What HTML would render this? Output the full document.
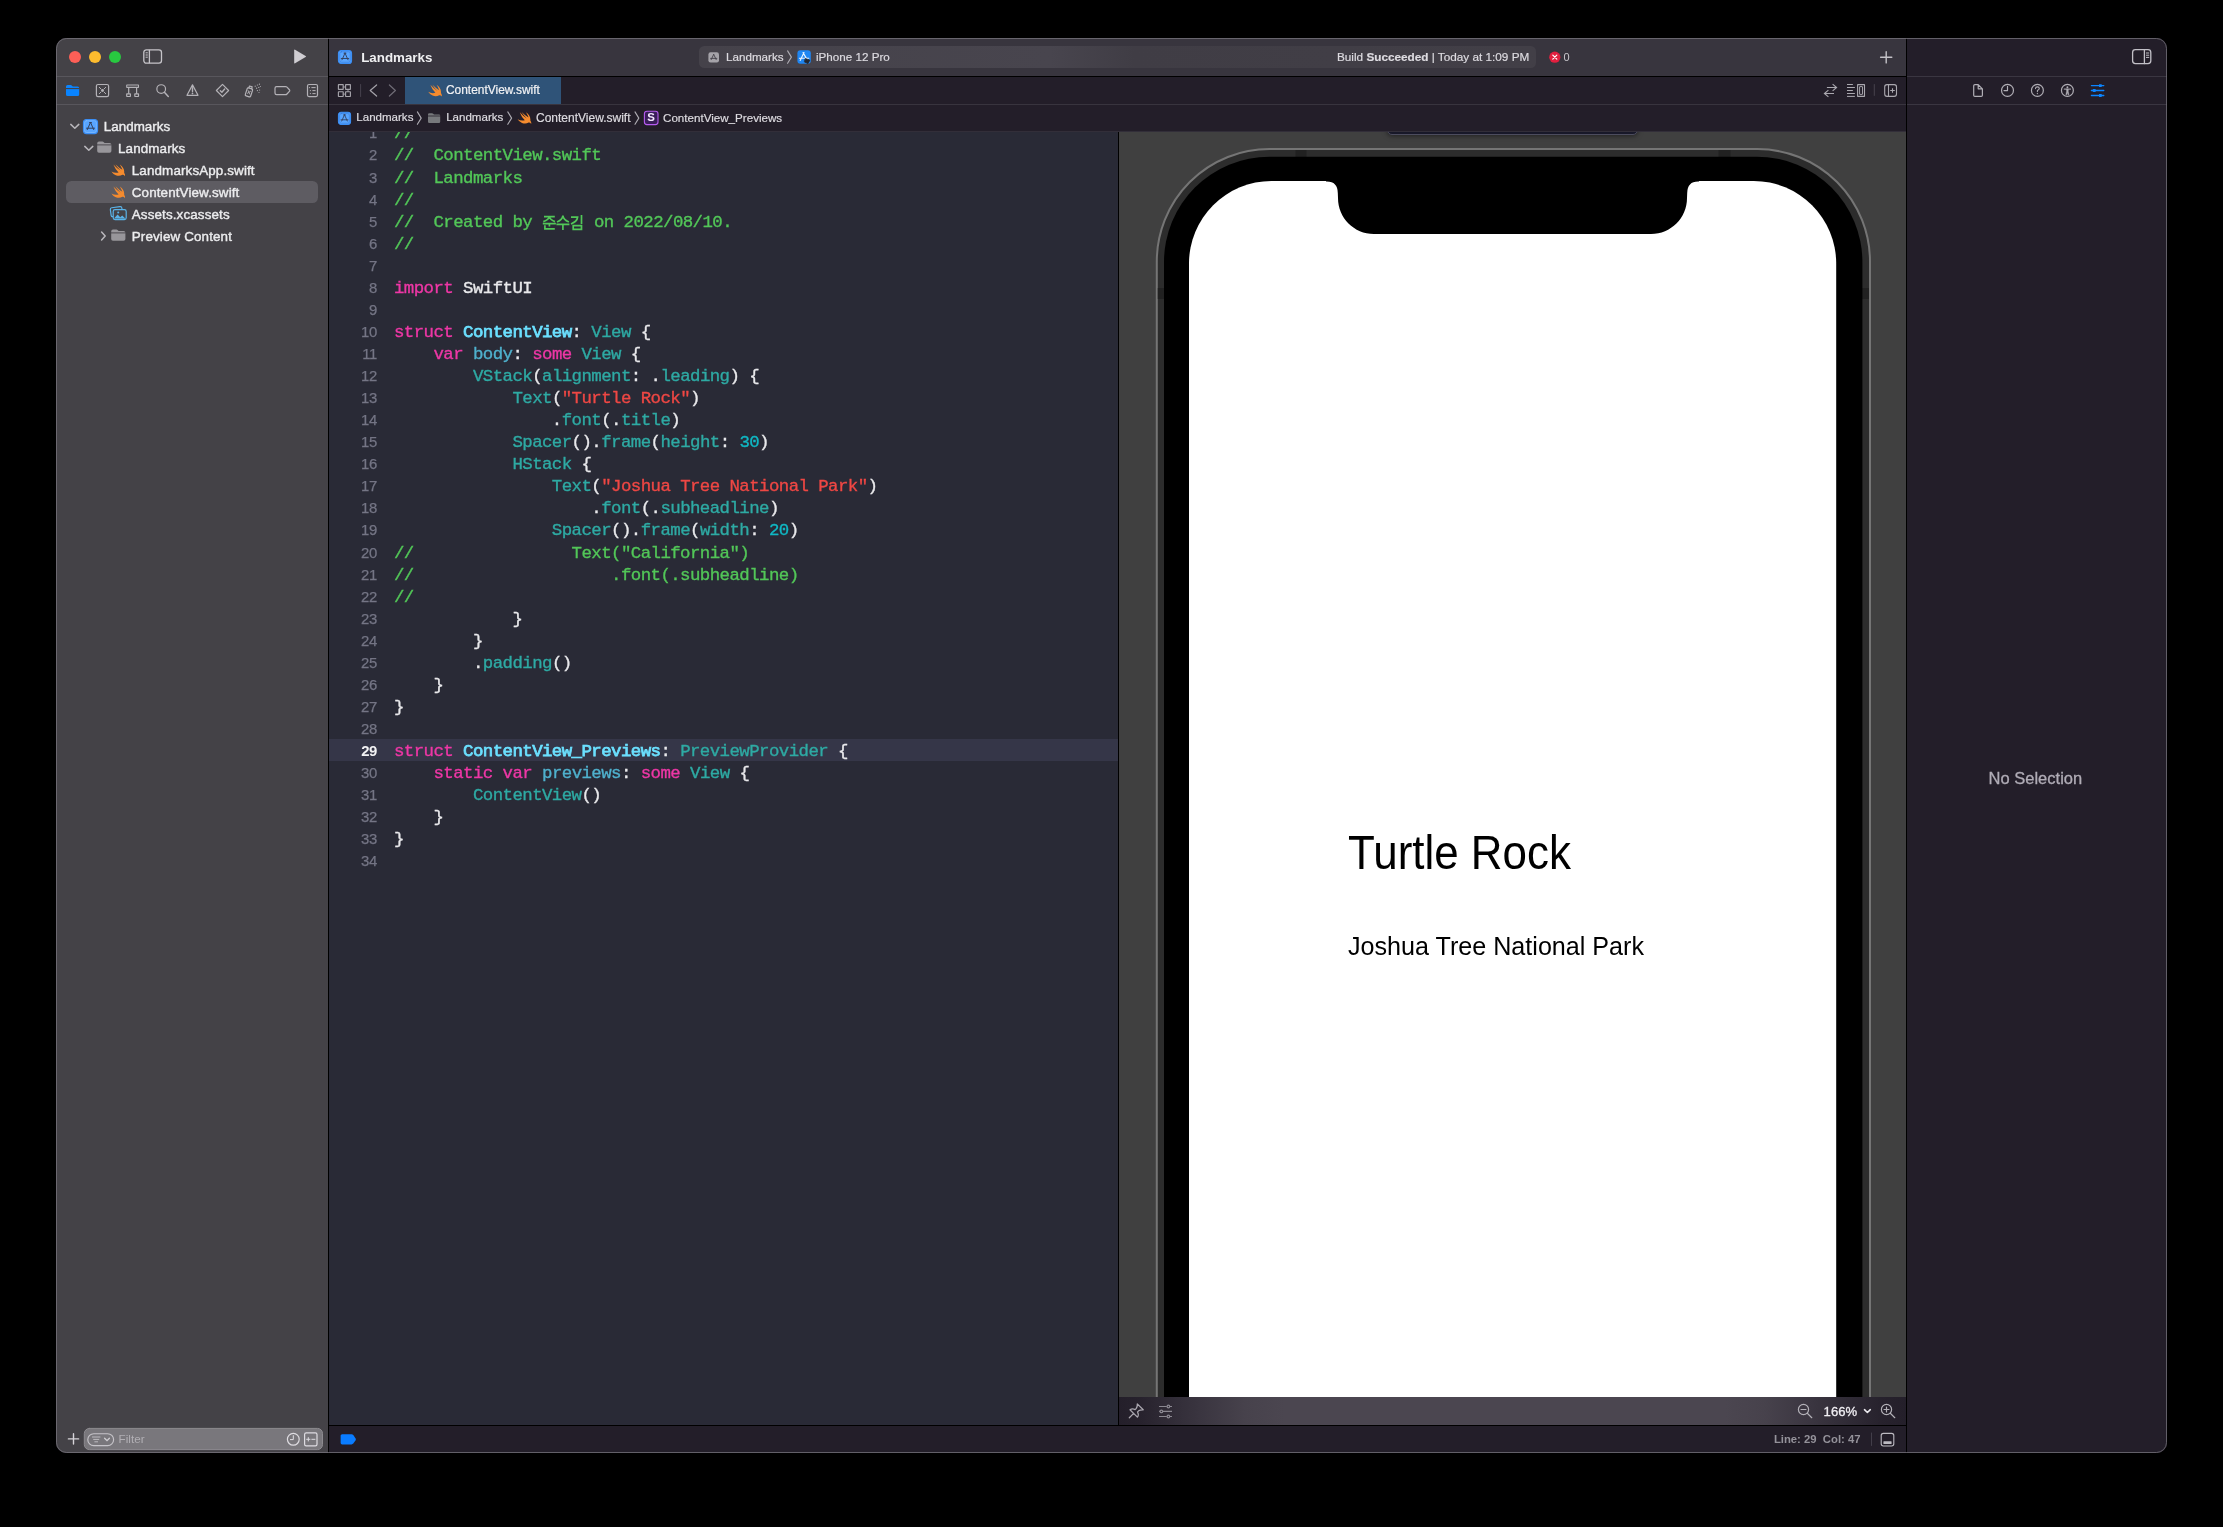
<!DOCTYPE html>
<html><head><meta charset="utf-8"><title>Xcode</title>
<style>
*{box-sizing:border-box;margin:0;padding:0}
html,body{width:2223px;height:1527px;background:#000;overflow:hidden}
body{font-family:"Liberation Sans",sans-serif;position:relative;color:#e6e6e8}
.abs{position:absolute}
.t{position:absolute;white-space:pre;line-height:1}
#win{position:absolute;left:56px;top:38px;width:2111px;height:1415px;border-radius:10.5px;overflow:hidden;background:#231e29}
#winborder{position:absolute;left:56px;top:38px;width:2111px;height:1415px;border-radius:10.5px;border:1px solid rgba(120,118,126,.75);pointer-events:none;z-index:50}
/* coordinates inside #win are page coords shifted by (-56,-38); use .pg wrapper to keep page coords */
#pg{position:absolute;left:-56px;top:-38px;width:2223px;height:1527px;will-change:transform}
#sidebar{left:56px;top:38px;width:272px;height:1415px;background:#444247}
.hl{position:absolute;height:1px}
.vl{position:absolute;width:1px}
.sb{font-size:13.4px;letter-spacing:.13px;color:#ececee;-webkit-text-stroke:0.4px #ececee}
.code{font-family:"Liberation Mono",monospace;font-size:17.4px;letter-spacing:-0.57px;line-height:22px;white-space:pre;position:absolute;left:394px;height:22px;color:#e9e9ec;-webkit-text-stroke:0.35px}
.ln{font-family:"Liberation Sans",sans-serif;font-size:14.9px;letter-spacing:-0.25px;line-height:22px;position:absolute;left:329px;width:48.1px;text-align:right;color:#747585;height:22px;-webkit-text-stroke:0.25px}
.c{color:#52c758}.k{color:#ee37a6}.d{color:#6be0ff;-webkit-text-stroke:0.75px #6be0ff}.o{color:#4fb1cd}.ty{color:#2eaaa4}.s{color:#ef4744}.n{color:#10b8c4}
svg{position:absolute;overflow:visible}
.kor{display:inline-block;width:42.1px;height:22px;vertical-align:top;position:relative}.kor svg{left:0;top:0}
.tb{font-size:11.65px;color:#dddbe0;-webkit-text-stroke:.2px}
.bc{font-size:11.85px;color:#dddbe0;-webkit-text-stroke:.2px}
.cur{color:#f2f2f4;font-weight:bold;-webkit-text-stroke:0;letter-spacing:-0.3px}
</style></head><body>
<div id="win"><div id="pg">
<!-- ===== backgrounds ===== -->
<div class="abs" id="sidebar"></div>
<div class="abs" style="left:328px;top:38px;width:1px;height:1415px;background:#000"></div>
<!-- editor title bar -->
<div class="abs" style="left:329px;top:38px;width:1577px;height:38px;background:#38353e"></div>
<div class="abs" style="left:329px;top:76px;width:1577px;height:1px;background:#000"></div>
<!-- tab bar + breadcrumb -->
<div class="abs" style="left:329px;top:77px;width:1577px;height:55px;background:#231e29"></div>
<div class="abs" style="left:329px;top:104px;width:1577px;height:1px;background:#38343e"></div>
<div class="abs" style="left:329px;top:131px;width:1577px;height:1px;background:#322e39"></div>
<!-- code editor -->
<div class="abs" style="left:329px;top:132px;width:789px;height:1293px;background:#292a36"></div>
<div class="abs" style="left:1118px;top:132px;width:1px;height:1293px;background:#000"></div>
<!-- canvas -->
<div class="abs" id="canvas" style="left:1119px;top:132px;width:787px;height:1265px;background:#404040;overflow:hidden"></div>
<!-- canvas bottom bar -->
<div class="abs" style="left:1119px;top:1397px;width:787px;height:28px;background:linear-gradient(90deg,#241f2a 0%,#27222d 2.7%,#3a3540 10.3%,#47424c 16%,#4b4650 21%,#4b4650 77%,#47424c 82%,#3a3540 88.1%,#27222d 96.7%,#241f2a 100%)"></div>
<div class="abs" style="left:329px;top:1425px;width:1577px;height:1px;background:#000"></div>
<!-- status bar -->
<div class="abs" style="left:329px;top:1426px;width:1577px;height:27px;background:#231e29"></div>
<!-- inspector -->
<div class="abs" style="left:1906px;top:38px;width:1px;height:1415px;background:#000"></div>
<div class="abs" style="left:1907px;top:38px;width:260px;height:1415px;background:#231e29"></div>
<div class="abs" style="left:1907px;top:76px;width:260px;height:1px;background:#3a3641"></div>
<div class="abs" style="left:1907px;top:104px;width:260px;height:1px;background:#3a3641"></div>
<!-- sidebar lines -->
<div class="abs" style="left:56px;top:76px;width:272px;height:1px;background:#58565c"></div>
<div class="abs" style="left:56px;top:104px;width:272px;height:1px;background:#58565c"></div>
<!-- ===== canvas / phone ===== -->
<div class="abs" style="left:1119px;top:132px;width:787px;height:1265px;overflow:hidden">
 <div class="abs" style="left:267.5px;top:-7px;width:251.5px;height:10.4px;border-radius:5px;background:#181829;border:.7px solid #4c4c5e;box-shadow:0 1px 5px rgba(0,0,0,.5)"></div>
 <svg style="left:0;top:0" width="787" height="1265" viewBox="1119 132 787 1265">
  <rect x="1156.8" y="149.1" width="713.2" height="1500" rx="112.5" ry="112.5" fill="#2c2c2c" stroke="#757575" stroke-width="2"/>
  <rect x="1295.5" y="150.1" width="11" height="7" fill="#212121"/>
  <rect x="1718.5" y="150.1" width="12" height="7" fill="#212121"/>
  <rect x="1157.8" y="288" width="7" height="11" fill="#212121"/>
  <rect x="1862" y="288" width="7" height="11" fill="#212121"/>
  <rect x="1164" y="156.7" width="698.4" height="1500" rx="105.5" ry="105.5" fill="#000"/>
  <rect x="1189" y="181" width="647.2" height="1401" rx="82.5" ry="82.5" fill="#fff"/>
  <path d="M1326 181.5 Q1337.6 181 1337.8 193 L1338 198 C1338 217.9 1354.1 234 1374 234 L1651 234 C1670.9 234 1687 217.9 1687 198 L1687.2 193 Q1687.4 181 1699 181.5 L1699 170 L1326 170 Z" fill="#000"/>
 </svg>
 <div class="t" id="tr" style="left:229.2px;top:696.6px;font-size:47.8px;color:#000;transform:scaleX(.919);transform-origin:0 0">Turtle Rock</div>
 <div class="t" id="jt" style="left:229.4px;top:801.8px;font-size:25.5px;color:#000;transform:scaleX(.985);transform-origin:0 0">Joshua Tree National Park</div>
</div>
<!-- ===== code ===== -->
<div class="abs" style="left:329px;top:132px;width:789px;height:1293px;overflow:hidden"><div class="abs" style="left:-329px;top:-132px;width:2223px;height:1527px">
<div class="abs" style="left:329px;top:739.1px;width:789px;height:22px;background:#353648"></div>
<div class="ln" style="top:122.38px">1</div>
<div class="code" style="top:123.40px"><span class="c">//</span></div>
<div class="ln" style="top:144.44px">2</div>
<div class="code" style="top:145.46px"><span class="c">//  ContentView.swift</span></div>
<div class="ln" style="top:166.50px">3</div>
<div class="code" style="top:167.52px"><span class="c">//  Landmarks</span></div>
<div class="ln" style="top:188.56px">4</div>
<div class="code" style="top:189.58px"><span class="c">//</span></div>
<div class="ln" style="top:210.62px">5</div>
<div class="code" style="top:211.64px"><span class="c">//  Created by </span><span class="kor"><svg width="42" height="22" viewBox="0 0 42 22" fill="none" stroke="#52c758" stroke-width="1.7"><path d="M2 4.6H12.8M7.4 4.6Q6.6 8 1.3 9.6M7.4 4.6Q8.2 8 13 9.6M.8 11.6H13.9M7.4 11.6V14.4M2.9 13.3V16.9H12.8"/><path d="M20.9 3.6Q20.5 7.5 15 10M20.9 3.6Q21.3 7.5 26.9 10M14.4 12.3H27.4M20.9 12.3V17.9"/><path d="M29 5.2H35.6Q35.2 9.5 29 12M39.5 3.1V12M31.2 13.6H39.5V17.3H31.2Z"/></svg></span><span class="c"> on 2022/08/10.</span></div>
<div class="ln" style="top:232.68px">6</div>
<div class="code" style="top:233.70px"><span class="c">//</span></div>
<div class="ln" style="top:254.74px">7</div>
<div class="ln" style="top:276.80px">8</div>
<div class="code" style="top:277.82px"><span class="k">import</span> SwiftUI</div>
<div class="ln" style="top:298.86px">9</div>
<div class="ln" style="top:320.92px">10</div>
<div class="code" style="top:321.94px"><span class="k">struct</span> <span class="d">ContentView</span>: <span class="ty">View</span> {</div>
<div class="ln" style="top:342.98px">11</div>
<div class="code" style="top:344.00px">    <span class="k">var</span> <span class="o">body</span>: <span class="k">some</span> <span class="ty">View</span> {</div>
<div class="ln" style="top:365.04px">12</div>
<div class="code" style="top:366.06px">        <span class="ty">VStack</span>(<span class="ty">alignment</span>: .<span class="ty">leading</span>) {</div>
<div class="ln" style="top:387.10px">13</div>
<div class="code" style="top:388.12px">            <span class="ty">Text</span>(<span class="s">"Turtle Rock"</span>)</div>
<div class="ln" style="top:409.16px">14</div>
<div class="code" style="top:410.18px">                .<span class="ty">font</span>(.<span class="ty">title</span>)</div>
<div class="ln" style="top:431.22px">15</div>
<div class="code" style="top:432.24px">            <span class="ty">Spacer</span>().<span class="ty">frame</span>(<span class="ty">height</span>: <span class="n">30</span>)</div>
<div class="ln" style="top:453.28px">16</div>
<div class="code" style="top:454.30px">            <span class="ty">HStack</span> {</div>
<div class="ln" style="top:475.34px">17</div>
<div class="code" style="top:476.36px">                <span class="ty">Text</span>(<span class="s">"Joshua Tree National Park"</span>)</div>
<div class="ln" style="top:497.40px">18</div>
<div class="code" style="top:498.42px">                    .<span class="ty">font</span>(.<span class="ty">subheadline</span>)</div>
<div class="ln" style="top:519.46px">19</div>
<div class="code" style="top:520.48px">                <span class="ty">Spacer</span>().<span class="ty">frame</span>(<span class="ty">width</span>: <span class="n">20</span>)</div>
<div class="ln" style="top:541.52px">20</div>
<div class="code" style="top:542.54px"><span class="c">//                Text("California")</span></div>
<div class="ln" style="top:563.58px">21</div>
<div class="code" style="top:564.60px"><span class="c">//                    .font(.subheadline)</span></div>
<div class="ln" style="top:585.64px">22</div>
<div class="code" style="top:586.66px"><span class="c">//</span></div>
<div class="ln" style="top:607.70px">23</div>
<div class="code" style="top:608.72px">            }</div>
<div class="ln" style="top:629.76px">24</div>
<div class="code" style="top:630.78px">        }</div>
<div class="ln" style="top:651.82px">25</div>
<div class="code" style="top:652.84px">        .<span class="ty">padding</span>()</div>
<div class="ln" style="top:673.88px">26</div>
<div class="code" style="top:674.90px">    }</div>
<div class="ln" style="top:695.94px">27</div>
<div class="code" style="top:696.96px">}</div>
<div class="ln" style="top:718.00px">28</div>
<div class="ln cur" style="top:740.06px">29</div>
<div class="code" style="top:741.08px"><span class="k">struct</span> <span class="d">ContentView_Previews</span>: <span class="ty">PreviewProvider</span> {</div>
<div class="ln" style="top:762.12px">30</div>
<div class="code" style="top:763.14px">    <span class="k">static</span> <span class="k">var</span> <span class="o">previews</span>: <span class="k">some</span> <span class="ty">View</span> {</div>
<div class="ln" style="top:784.18px">31</div>
<div class="code" style="top:785.20px">        <span class="ty">ContentView</span>()</div>
<div class="ln" style="top:806.24px">32</div>
<div class="code" style="top:807.26px">    }</div>
<div class="ln" style="top:828.30px">33</div>
<div class="code" style="top:829.32px">}</div>
<div class="ln" style="top:850.36px">34</div>
</div></div>
<!-- ===== sidebar ===== -->
<div class="abs" style="left:68.8px;top:50.8px;width:12.4px;height:12.4px;border-radius:50%;background:#fe5f57"></div>
<div class="abs" style="left:88.8px;top:50.8px;width:12.4px;height:12.4px;border-radius:50%;background:#febc2e"></div>
<div class="abs" style="left:108.8px;top:50.8px;width:12.4px;height:12.4px;border-radius:50%;background:#28c840"></div>
<!-- sidebar toggle -->
<svg style="left:143px;top:49px" width="20" height="16" viewBox="0 0 20 16" fill="none" stroke="#c6c4c9" stroke-width="1.3"><rect x=".8" y=".8" width="17.7" height="13.4" rx="2.6"/><path d="M6.4 .8V14.2"/><path d="M2.6 3.8H4.8M2.6 6H4.8M2.6 8.2H4.8" stroke-width="1"/></svg>
<!-- play -->
<svg style="left:293.2px;top:49px" width="14" height="16" viewBox="0 0 14 16"><path d="M1.2 1.2Q1.2 .2 2.1 .7L12.6 6.9Q13.6 7.5 12.6 8.1L2.1 14.3Q1.2 14.8 1.2 13.8Z" fill="#cfcdd2"/></svg>
<!-- navigator icons -->
<svg style="left:56px;top:77px" width="272" height="27" viewBox="56 77 272 27" fill="none" stroke="#b4b2b7" stroke-width="1.2" stroke-linecap="round" stroke-linejoin="round">
 <path d="M66 86.6Q66 85 67.6 85H70.6Q71.4 85 72 85.7L72.8 86.6H77.6Q79.2 86.6 79.2 88.2V94.4Q79.2 96 77.6 96H67.6Q66 96 66 94.4Z" fill="#0a84ff" stroke="none"/>
 <path d="M65.5 88.55H79.7" stroke="#444247" stroke-width="1.1" stroke-linecap="butt"/>
 <rect x="96.4" y="84.5" width="12.2" height="12.1" rx="1.6"/><path d="M99.3 87.3L100.9 88.9M105.7 87.3L104.1 88.9M99.3 93.7L100.9 92.1M105.7 93.7L104.1 92.1" stroke-width="1"/><circle cx="102.5" cy="90.5" r="1.45" fill="#b4b2b7" stroke="none"/>
 <g stroke-linejoin="miter" stroke-linecap="butt"><rect x="126.7" y="85" width="11.8" height="2.35" rx=".2" stroke-width="1.05"/><path d="M128.7 87.4V93.8M136.6 87.4V93.8"/><rect x="126.7" y="93.9" width="3.7" height="2.6" rx=".2"/><rect x="134.8" y="93.9" width="3.7" height="2.6" rx=".2"/></g>
 <circle cx="161.2" cy="89.1" r="4.35"/><path d="M164.4 92.3L168.3 96.4" stroke-width="1.5"/>
 <path d="M192.5 84.9L198 95.3H187Z"/><path d="M192.5 87.8V91.6" stroke-width="1.4"/><circle cx="192.5" cy="93.4" r=".85" fill="#b4b2b7" stroke="none"/>
 <path d="M222.5 84.4L228.6 90.5L222.5 96.6L216.4 90.5Z"/><path d="M220.3 90.7L221.9 92.3L224.7 89" stroke-width="1.35"/>
 <g transform="rotate(18 250 91)"><rect x="246.6" y="88.4" width="5.6" height="8.4" rx="1.2"/><path d="M248 88.4V86.4H250.8V88.4"/><path d="M248.2 91.2L250.6 94M250.6 91.2L248.2 94" stroke-width=".8"/></g>
 <g stroke="none" fill="#b4b2b7"><circle cx="255.2" cy="86.2" r=".6"/><circle cx="257.4" cy="85" r=".6"/><circle cx="259.4" cy="84.2" r=".6"/><circle cx="256.6" cy="88.2" r=".6"/><circle cx="258.8" cy="87.4" r=".6"/><circle cx="260.4" cy="86.6" r=".5"/><circle cx="257.4" cy="90.6" r=".6"/><circle cx="259.6" cy="90" r=".6"/><circle cx="259" cy="92.6" r=".5"/></g>
 <path d="M276.6 86.6H285.6Q286.4 86.6 287 87.2L289.6 90Q290 90.6 289.6 91.2L287 94Q286.4 94.7 285.6 94.7H276.6Q275 94.7 275 93.1V88.2Q275 86.6 276.6 86.6Z"/>
 <rect x="307.5" y="84.5" width="10" height="12.1" rx="1.5"/><path d="M311.4 87.6H315.6M312.4 90.6H315.6M312.4 93.6H315.6" stroke-width="1" stroke-linecap="butt"/><g fill="#b4b2b7" stroke="none"><rect x="308.9" y="87.1" width="1" height="1"/><rect x="309.9" y="90.1" width="1" height="1"/><rect x="309.9" y="93.1" width="1" height="1"/></g>
</svg>
<!-- tree -->
<div class="abs" style="left:66px;top:181px;width:252px;height:22px;border-radius:5.5px;background:#5e5c62"></div>
<svg style="left:56px;top:110px" width="272" height="140" viewBox="56 110 272 140" fill="none" stroke-linecap="round" stroke-linejoin="round">
 <g stroke="#b9b7bc" stroke-width="1.5"><path d="M70.8 124.4L74.8 128.2L78.8 124.4"/><path d="M84.8 146.4L88.8 150.2L92.8 146.4"/><path d="M101.6 232L105.2 236L101.6 240"/></g>
 <!-- project icon -->
 <rect x="83.5" y="119.6" width="14" height="14" rx="3" fill="#58a5ff" stroke="#3b8ef5" stroke-width="1.2"/><rect x="84.6" y="120.7" width="11.8" height="11.8" rx="2" fill="none" stroke="#8cc3ff" stroke-width=".5"/>
 <path d="M90.5 122.4L87.3 129.6M90.5 122.4L93.7 129.6M86.5 128.2H94.5M89.5 122.6H91.5" stroke="#33405e" stroke-width="1"/>
 <!-- folders -->
 <g fill="#98969b" stroke="none">
  <path d="M97.2 143.4Q97.2 141.6 99 141.6H102.4Q103.2 141.6 103.8 142.2L104.6 143H109.6Q111.4 143 111.4 144.8V151Q111.4 152.8 109.6 152.8H99Q97.2 152.8 97.2 151Z"/>
  <path d="M111.2 231.4Q111.2 229.6 113 229.6H116.4Q117.2 229.6 117.8 230.2L118.6 231H123.6Q125.4 231 125.4 232.8V239Q125.4 240.8 123.6 240.8H113Q111.2 240.8 111.2 239Z"/>
 </g>
 <path d="M97.2 144.9H111.4M111.2 232.9H125.4" stroke="#444247" stroke-width=".9"/>
 <!-- swift birds -->
 <g fill="#f58b2e" stroke="none">
  <path id="bird" d="M113.4 164.4Q117.2 168.6 120.6 170.6Q117 167.2 115.4 164.2Q119.6 168.4 122.4 169.8Q121.2 166.6 119.8 164.4Q124 167.2 124.2 171.6Q124 172.6 124.4 173.2Q125.4 174.6 125 176.2Q124 174.6 122.4 174.8Q119.4 176.6 115.8 175.2Q113 174 111.4 171.4Q115 173.6 118.6 172.4Q115.4 169.6 113.4 164.4Z"/>
  <use href="#bird" y="22"/>
 </g>
 <!-- assets icon -->
 <g stroke="#5ab3e8" stroke-width="1.2" fill="none"><rect x="110.6" y="207.2" width="11.6" height="9" rx="1.6" transform="rotate(-8 116 211)"/><rect x="113.2" y="209.6" width="13" height="10" rx="1.8" fill="#444247"/></g>
 <path d="M114 218.6L117.6 214.6L120.2 217.2L122.2 215.4L125.6 218.8Z" fill="#5ab3e8" stroke="none"/><circle cx="118.2" cy="212.6" r="1" fill="#5ab3e8"/>
</svg>
<div class="t sb" style="left:103.8px;top:119.85px;letter-spacing:.02px">Landmarks</div>
<div class="t sb" style="left:118px;top:141.85px">Landmarks</div>
<div class="t sb" style="left:131.8px;top:163.85px">LandmarksApp.swift</div>
<div class="t sb" style="left:131.8px;top:185.85px">ContentView.swift</div>
<div class="t sb" style="left:131.8px;top:207.85px">Assets.xcassets</div>
<div class="t sb" style="left:131.8px;top:229.85px">Preview Content</div>
<!-- filter bar -->
<svg style="left:56px;top:1426px" width="272" height="26" viewBox="56 1426 272 26" fill="none" stroke="#c4c2c7" stroke-width="1.2" stroke-linecap="round">
 <path d="M68.4 1438.9H78.6M73.5 1433.8V1444" stroke-width="1.4" stroke="#d6d4d9"/>
 <rect x="84.3" y="1428.4" width="238.2" height="21.2" rx="5" fill="#79777c" stroke="#8d8b90" stroke-width="1"/>
 <rect x="87.8" y="1433.7" width="25.8" height="11.9" rx="5.95" stroke="#c6c4c9" stroke-width="1.15"/>
 <path d="M92.4 1437H100M93.6 1439.4H98.8M94.8 1441.8H97.6" stroke="#bdbbc0" stroke-width="1"/>
 <path d="M104.6 1438.2L107 1440.6L109.4 1438.2" stroke="#d0ced3" stroke-width="1.3"/>
 <circle cx="293.3" cy="1439.3" r="5.9" stroke="#dedce1"/><path d="M293.3 1435.6V1439.6H290.4" stroke="#dedce1" stroke-width="1"/>
 <rect x="304.6" y="1432.8" width="12.4" height="13" rx="1.6" stroke="#dedce1"/><path d="M306.6 1439.3H310M308.3 1437.6V1441M311.8 1439.3H315" stroke="#dedce1" stroke-width="1"/>
</svg>
<div class="t" style="left:118.6px;top:1433.2px;font-size:11.7px;color:#b1afb4">Filter</div>
<!-- ===== editor title bar ===== -->
<svg style="left:329px;top:38px" width="1577px" height="94" viewBox="329 38 1577 94" fill="none" stroke-linecap="round" stroke-linejoin="round">
 <defs>
  <g id="proj"><rect x=".6" y=".6" width="14" height="14" rx="3" fill="#58a5ff" stroke="#3b8ef5" stroke-width="1.2"/><rect x="2" y="2" width="11.2" height="11.2" rx="1.9" fill="none" stroke="#2f74d6" stroke-width=".6"/><path d="M7.6 3.4L4.4 10.6M7.6 3.4L10.8 10.6M3.6 9.2H11.6M6.6 3.6H8.6" stroke="#33405e" stroke-width="1"/></g>
  <path id="bird2" d="M2.4 .6Q6 4.8 9.4 6.8Q5.8 3.4 4.2 .4Q8.4 4.6 11.2 6Q10 2.8 8.6 .6Q12.8 3.4 13 7.8Q12.8 8.8 13.2 9.4Q14.2 10.8 13.8 12.4Q12.8 10.8 11.2 11Q8.2 12.8 4.6 11.4Q1.8 10.2 .2 7.6Q3.8 9.8 7.4 8.6Q4.2 5.8 2.4 .6Z" fill="#f58b2e"/>
  <path id="chev" d="M.4 .4L4.2 6.6L.4 12.8" stroke="#aeacb3" stroke-width="1.1" fill="none"/>
 </defs>
 <g transform="translate(337.9 49.9) scale(.934)"><use href="#proj"/></g>
 <!-- scheme pill -->
 <rect x="699" y="46" width="837" height="22" rx="5.5" fill="url(#pillg)"/>
 <linearGradient id="pillg" x1="699" x2="1536" gradientUnits="userSpaceOnUse"><stop offset="0" stop-color="#45424a"/><stop offset=".42" stop-color="#48454e"/><stop offset=".52" stop-color="#403d45"/><stop offset="1" stop-color="#423f47"/></linearGradient>
 <rect x="708.4" y="52.2" width="10.6" height="10.2" rx="2.2" fill="#a5a3a9"/><path d="M713.7 54.4L711.2 59.6M713.7 54.4L716.2 59.6M710.6 58.4H716.8" stroke="#45424a" stroke-width=".9"/>
 <use href="#chev" x="787.2" y="50.5"/>
 <rect x="797.4" y="50.2" width="13.4" height="13.6" rx="3" fill="#1f86f2"/><path d="M804 52.6L800.2 60.4M803 52.6L807.6 60.4M799.4 58.2H808.8" stroke="#e9f4ff" stroke-width="1.1"/><path d="M805.6 58.6L809.8 60.2L808 63.6L804.6 62Z" fill="#23262d" stroke="#23262d" stroke-width=".8"/>
 <!-- error badge -->
 <circle cx="1554.8" cy="57.2" r="5.6" fill="#e21f3f"/><path d="M1552.8 55.2L1556.8 59.2M1556.8 55.2L1552.8 59.2" stroke="#fff" stroke-width="1.2"/>
 <!-- plus -->
 <path d="M1880.6 57.3H1891.8M1886.2 51.7V62.9" stroke="#c4c2c7" stroke-width="1.4"/>
 <!-- tab bar -->
 <rect x="405" y="77" width="156" height="27" fill="#2f5378"/>
 <g stroke="#a5a3aa" stroke-width="1.15" stroke-linejoin="miter"><rect x="338.4" y="84.6" width="4.8" height="4.8" rx=".2"/><rect x="345.6" y="84.6" width="4.8" height="4.8" rx=".2"/><rect x="338.4" y="91.7" width="4.8" height="4.8" rx=".2"/><rect x="345.6" y="91.7" width="4.8" height="4.8" rx=".2"/><path d="M343.2 87H345.6M343.2 94.1H345.6M348 89.4V91.7" stroke-width=".9"/></g>
 <path d="M360.6 84.5V96.5" stroke="#46424d" stroke-width="1"/>
 <path d="M376.6 85L370.2 90.5L376.6 96" stroke="#a5a3aa" stroke-width="1.2"/><path d="M389.4 85L395.4 90.5L389.4 96" stroke="#6f6c76" stroke-width="1.2"/>
 <use href="#bird2" x="428" y="84.2" transform="translate(0 0)"/>
 <!-- right tab icons -->
 <g stroke="#aaa8af" stroke-width="1.1" stroke-linecap="butt" stroke-linejoin="miter"><path d="M1826.9 87.5H1836.4M1832.6 84.2L1836.6 87.5L1832.6 90.8M1834 93.5H1824.6M1828.4 90.2L1824.4 93.5L1828.4 96.8"/>
 <path d="M1847 84.5H1852.9M1847 87.5H1854.9M1847 90.5H1852.9M1847 93.5H1854.9M1847 96.4H1854.9" stroke-width="1"/><rect x="1857.6" y="84.6" width="6.9" height="11.8" rx=".2"/><rect x="1859.6" y="86.6" width="2.9" height="7.8" rx=".2" stroke-width=".95"/>
 <path d="M1874.3 84.1V95.8" stroke="#46424d" stroke-width="1"/>
 <rect x="1884.7" y="84.6" width="11.8" height="11.8" rx="2.3"/><path d="M1888.5 84.6V96.4M1890.2 90.5H1894.8M1892.5 88.2V92.8"/></g>
 <!-- breadcrumb -->
 <g transform="translate(337.9 111.8) scale(.868)"><use href="#proj"/></g>
 <use href="#chev" x="417" y="111.5"/><use href="#chev" x="507.4" y="111.5"/><use href="#chev" x="634.6" y="111.5"/>
 <path d="M428 114.4Q428 113.2 429.2 113.2H432Q432.8 113.2 433.2 113.7L434 114.4H439Q440.2 114.4 440.2 115.6V121.7Q440.2 122.9 439 122.9H429.2Q428 122.9 428 121.7Z" fill="#77797c"/><path d="M428 116H440.2" stroke="#231e29" stroke-width=".8"/>
 <use href="#bird2" x="517.4" y="111.6"/>
 <rect x="644.4" y="111.2" width="13.6" height="13.4" rx="2.6" fill="#3a1d5a" stroke="#b65cf0" stroke-width="1.1"/>
</svg>
<div class="t" style="left:361.2px;top:51.4px;font-size:13.35px;font-weight:bold;color:#f0f0f2">Landmarks</div>
<div class="t tb" style="left:726px;top:51.2px">Landmarks</div>
<div class="t tb" style="left:816px;top:51.2px">iPhone 12 Pro</div>
<div class="t tb" style="left:1337px;top:51.1px;font-size:11.76px">Build <b>Succeeded</b> | Today at 1:09 PM</div>
<div class="t" style="left:1563.6px;top:52.4px;font-size:11px;color:#c9c7cc">0</div>
<div class="t bc" style="left:446px;top:84.8px;color:#f2f2f4;font-size:11.93px">ContentView.swift</div>
<div class="t bc" style="left:356.3px;top:112.02px;font-size:11.55px">Landmarks</div>
<div class="t bc" style="left:446.2px;top:112.02px;font-size:11.55px">Landmarks</div>
<div class="t bc" style="left:536px;top:111.64px;font-size:12.0px">ContentView.swift</div>
<div class="t bc" style="left:663px;top:111.97px;font-size:11.61px">ContentView_Previews</div>
<div class="t" style="left:647.3px;top:112px;font-size:11.4px;font-weight:bold;color:#f3e8ff">S</div>
<!-- ===== canvas bottom bar / status bar / inspector ===== -->
<svg style="left:1119px;top:1397px" width="787" height="55" viewBox="1119 1397 787 55" fill="none" stroke="#b3b1b8" stroke-width="1.2" stroke-linecap="round" stroke-linejoin="round">
 <!-- pin -->
 <g transform="translate(1129.3 1417.8) rotate(45)" stroke="#aaa7af" stroke-width="1.25"><path d="M-5.25 -6.2H5.25Q4.8 -9.2 1.7 -9.9V-11.5Q2 -13.6 4.2 -15.5H-4.2Q-2 -13.6 -1.7 -11.5V-9.9Q-4.8 -9.2 -5.25 -6.2ZM0 -6.2V0"/></g>
 <!-- sliders (dim) -->
 <g stroke="#8a8790" stroke-width="1.2" stroke-linecap="butt"><path d="M1159 1406.5H1166.8M1170 1406.5H1172M1159 1411.4H1159.8M1163 1411.4H1172M1159 1416.5H1166.8M1170 1416.5H1172"/><circle cx="1168.4" cy="1406.5" r="1.3"/><circle cx="1161.4" cy="1411.4" r="1.3"/><circle cx="1168.4" cy="1416.5" r="1.3"/></g>
 <!-- zoom out -->
 <circle cx="1803.5" cy="1409.5" r="5.1"/><path d="M1807.3 1413.3L1811.8 1417.7M1801 1409.5H1806"/>
 <!-- chevron -->
 <path d="M1864.5 1409.7L1867.4 1412.5L1870.3 1409.7" stroke="#eceaef" stroke-width="1.6"/>
 <!-- zoom in -->
 <circle cx="1886.5" cy="1409.5" r="5.1"/><path d="M1890.3 1413.3L1894.8 1417.7M1884 1409.5H1889M1886.5 1407V1412"/>
 <!-- status bar -->
 <path d="M1871.5 1433V1445.5" stroke="#423e49" stroke-width="1"/>
 <rect x="1881.2" y="1433.4" width="12.6" height="12.6" rx="2.2" stroke="#bdbbc2" stroke-width="1.1"/><rect x="1883.4" y="1441.2" width="8.2" height="2.8" rx=".6" fill="#bdbbc2" stroke="none"/>
</svg>
<div class="t" style="left:1823.6px;top:1404.85px;font-size:13.1px;color:#f0eef3;-webkit-text-stroke:.3px">166%</div>
<div class="t" style="left:1773.9px;top:1434.33px;font-size:11.31px;font-weight:bold;color:#94929a">Line: 29  Col: 47</div>
<!-- status left tag -->
<svg style="left:340px;top:1433px" width="18" height="13" viewBox="0 0 18 13"><path d="M2.2 1.2H11.6Q12.6 1.2 13.3 2L15.6 5.4Q16.2 6.3 15.6 7.2L13.3 10.6Q12.6 11.4 11.6 11.4H2.2Q.6 11.4 .6 9.8V2.8Q.6 1.2 2.2 1.2Z" fill="#0a7cff"/></svg>
<!-- inspector -->
<svg style="left:1907px;top:38px" width="260" height="70" viewBox="1907 38 260 70" fill="none" stroke="#b0aeb5" stroke-width="1.2" stroke-linecap="round" stroke-linejoin="round">
 <rect x="2132.6" y="49.6" width="18.2" height="14" rx="2.8" stroke="#c2c0c7" stroke-width="1.3"/><path d="M2144.4 49.6V63.6" stroke="#c2c0c7" stroke-width="1.3"/><path d="M2146.4 53H2148.8M2146.4 55.2H2148.8M2146.4 57.4H2148.8" stroke="#c2c0c7" stroke-width="1"/>
 <path d="M1973.7 85.8Q1973.7 84.6 1974.9 84.6H1978.2L1982.4 88.8V95.2Q1982.4 96.4 1981.2 96.4H1974.9Q1973.7 96.4 1973.7 95.2ZM1978.2 84.6V88.8H1982.4"/>
 <circle cx="2007.5" cy="90.4" r="5.95"/><path d="M2007.5 86.4V90.6H2004"/>
 <circle cx="2037.4" cy="90.4" r="5.95"/><path d="M2035.5 88.6Q2035.5 86.9 2037.4 86.9Q2039.3 86.9 2039.3 88.5Q2039.3 89.6 2037.4 90.4V91.6" stroke-width="1.1"/><circle cx="2037.4" cy="93.6" r=".7" fill="#b0aeb5" stroke="none"/>
 <circle cx="2067.4" cy="90.4" r="5.95"/><circle cx="2067.4" cy="87.2" r=".95" fill="#b0aeb5" stroke="none"/><path d="M2064.2 89.1H2070.6" stroke-width="1"/><path d="M2066.5 89.1H2068.3V91.6L2069 94.8H2068L2067.4 92.4L2066.8 94.8H2065.8L2066.5 91.6Z" fill="#b0aeb5" stroke-width=".4"/>
 <g stroke="#0a84ff" stroke-width="1.3"><path d="M2091.4 85.6H2103.8M2091.4 90.5H2103.8M2091.4 95.5H2103.8"/><g fill="#0a84ff" stroke="none"><path d="M2099 84.2H2101.4L2102.4 85.6L2101.4 87H2099Z"/><path d="M2095.6 89.1H2093.2L2092.2 90.5L2093.2 91.9H2095.6Z"/><path d="M2099 94.1H2101.4L2102.4 95.5L2101.4 96.9H2099Z"/></g></g>
</svg>
<div class="t" style="left:1988.6px;top:769.8px;font-size:16.5px;color:#b0acb6;-webkit-text-stroke:.3px">No Selection</div>
</div></div>
<div id="winborder"></div>
</body></html>
